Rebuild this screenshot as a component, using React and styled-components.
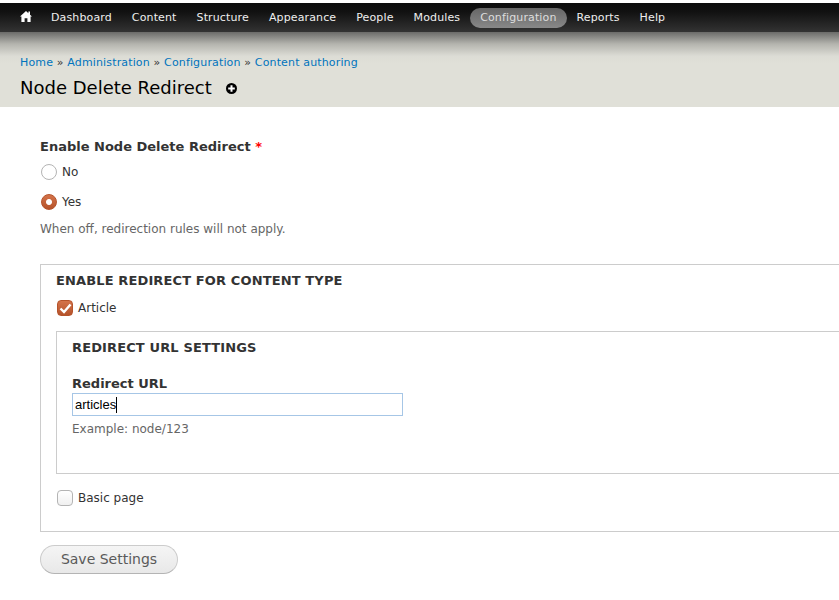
import React from "react";
import styled, { createGlobalStyle } from "styled-components";

const GlobalStyle = createGlobalStyle`
  html, body {
    margin: 0;
    padding: 0;
    background: #fff;
    overflow: hidden;
  }
  body {
    font-family: "DejaVu Sans", sans-serif;
    font-size: 12px;
    color: #333;
  }
`;

const Toolbar = styled.nav`
  box-sizing: border-box;
  height: 29px;
  margin-top: 3px;
  padding: 0 0 0 20px;
  display: flex;
  align-items: center;
  background: linear-gradient(#0d0d0d, #111 30%, #333);
`;

const HomeLink = styled.a`
  display: flex;
  margin: -3px 9px 0 0;
  color: #fff;
`;

const NavLink = styled.a`
  font-size: 11px;
  line-height: 20px;
  padding: 0 10px;
  height: 20px;
  letter-spacing: 0.13px;
  color: ${(p) => (p.$active ? "#ddd" : "#eee")};
  border-radius: 10px;
  background: ${(p) => (p.$active ? "linear-gradient(#666, #888)" : "none")};
`;

const PageHeader = styled.header`
  box-sizing: border-box;
  height: 75px;
  padding: 21px 20px 0;
  background: linear-gradient(#6b6b69, #b4b4ae 12px, #dcdcd5 24px, #e0e0d8 32px);
`;

const Breadcrumb = styled.div`
  font-size: 11px;
  line-height: 20px;
  letter-spacing: 0.15px;
  color: #333;
`;

const Crumb = styled.a`
  color: #0074bd;
`;

const TitleRow = styled.div`
  display: flex;
  align-items: center;
  margin-top: 2px;
`;

const Title = styled.h1`
  margin: 0;
  font-size: 18px;
  font-weight: 400;
  line-height: 25px;
  color: #000;
`;

const Shortcut = styled.span`
  display: flex;
  margin: 2px 0 0 14px;
`;

const Content = styled.main`
  padding: 29px 0 0 40px;
`;

const Label = styled.label`
  display: block;
  font-weight: 700;
  font-size: 13px;
  line-height: 22px;
`;

const Required = styled.span`
  color: #f00;
`;

const Option = styled.div`
  display: flex;
  align-items: center;
  gap: 5px;
  height: 18px;
  margin-top: ${(p) => p.$top}px;
  font-size: 12px;
`;

const Radio = styled.span`
  box-sizing: border-box;
  width: 16px;
  height: 16px;
  margin-left: 1px;
  border-radius: 50%;
  border: 1px solid ${(p) => (p.$checked ? "#b5532b" : "#b4b4b4")};
  background: ${(p) =>
    p.$checked
      ? "radial-gradient(circle, #fff 0 2.5px, transparent 3.5px), linear-gradient(#d4734a, #b5532b)"
      : "#fff"};
`;

const Check = styled.span`
  box-sizing: border-box;
  width: 16px;
  height: 16px;
  margin-left: 1px;
  display: flex;
  align-items: center;
  justify-content: center;
  border-radius: 4px;
  border: 1px solid ${(p) => (p.$checked ? "#b5532b" : "#b4b4b4")};
  background: ${(p) => (p.$checked ? "linear-gradient(#d4734a, #b5532b)" : "linear-gradient(#fff, #f0f0f0)")};
`;

const Description = styled.div`
  font-size: 12px;
  line-height: 18px;
  color: #666;
  margin-top: ${(p) => p.$top}px;
`;

const Fieldset = styled.section`
  box-sizing: border-box;
  height: ${(p) => p.$height}px;
  margin-top: ${(p) => p.$top}px;
  padding: ${(p) => p.$pad}px 0 0 15px;
  border: 1px solid #ccc;
  border-right: none;
`;

const Legend = styled.h2`
  margin: 0;
  font-size: 13px;
  font-weight: 700;
  line-height: 18px;
  letter-spacing: 0.13px;
  text-transform: uppercase;
`;

const FieldLabel = styled(Label)`
  margin-top: 18px;
  line-height: 18px;
`;

const UrlInput = styled.div`
  box-sizing: border-box;
  width: 331px;
  height: 23px;
  padding: 0 2px;
  display: flex;
  align-items: center;
  border: 1px solid #a6c6e6;
  font-family: "Liberation Sans", Arial, sans-serif;
  font-size: 13px;
  color: #000;
`;

const Caret = styled.span`
  width: 1px;
  height: 16px;
  background: #000;
`;

const SaveButton = styled.button`
  display: block;
  box-sizing: border-box;
  width: 138px;
  height: 29px;
  margin-top: 13px;
  padding: 0 0 2px;
  border: 1px solid #ccc;
  border-bottom-color: #b4b4b4;
  border-radius: 15px;
  background: linear-gradient(#f5f5f5, #e8e8e8);
  font-family: inherit;
  font-size: 14px;
  color: #5a5a5a;
`;

const navItems = ["Dashboard", "Content", "Structure", "Appearance", "People", "Modules", "Configuration", "Reports", "Help"];
const crumbs = ["Home", "Administration", "Configuration", "Content authoring"];

const App = () => (
  <>
    <GlobalStyle />
    <Toolbar>
      <HomeLink>
        <svg width="12" height="11" viewBox="0 0 12 11" fill="currentColor">
          <path d="M6 0 L8.4 2.2 L8.4 0.6 L10 0.6 L10 3.7 L12 5.6 L10.6 5.6 L10.6 11 L7.4 11 L7.4 7.2 L4.6 7.2 L4.6 11 L1.4 11 L1.4 5.6 L0 5.6 Z" />
        </svg>
      </HomeLink>
      {navItems.map((item) => (
        <NavLink key={item} $active={item === "Configuration"}>{item}</NavLink>
      ))}
    </Toolbar>
    <PageHeader>
      <Breadcrumb>
        {crumbs.map((crumb, idx) => (
          <React.Fragment key={crumb}>
            {idx > 0 && " » "}
            <Crumb>{crumb}</Crumb>
          </React.Fragment>
        ))}
      </Breadcrumb>
      <TitleRow>
        <Title>Node Delete Redirect</Title>
        <Shortcut>
          <svg width="11" height="11" viewBox="0 0 11 11">
            <circle cx="5.5" cy="5.5" r="5.5" fill="#000" />
            <path d="M4.5 2.2h2v2.3h2.3v2H6.5v2.3h-2V6.5H2.2v-2h2.3z" fill="#fff" />
          </svg>
        </Shortcut>
      </TitleRow>
    </PageHeader>
    <Content>
      <Label>Enable Node Delete Redirect <Required>*</Required></Label>
      <Option $top={5}><Radio />No</Option>
      <Option $top={12}><Radio $checked />Yes</Option>
      <Description $top={9}>When off, redirection rules will not apply.</Description>
      <Fieldset $height={268} $top={26} $pad={7}>
        <Legend>Enable redirect for content type</Legend>
        <Option $top={9}>
          <Check $checked>
            <svg width="13" height="11" viewBox="0 0 13 11">
              <path d="M1.5 5.5 L5 9 L11.5 1.5" fill="none" stroke="#fff" strokeWidth="2.4" />
            </svg>
          </Check>
          Article
        </Option>
        <Fieldset $height={143} $top={14} $pad={7}>
          <Legend>Redirect URL settings</Legend>
          <FieldLabel>Redirect URL</FieldLabel>
          <UrlInput>articles<Caret /></UrlInput>
          <Description $top={4}>Example: node/123</Description>
        </Fieldset>
        <Option $top={15}><Check />Basic page</Option>
      </Fieldset>
      <SaveButton>Save Settings</SaveButton>
    </Content>
  </>
);

export default App;
